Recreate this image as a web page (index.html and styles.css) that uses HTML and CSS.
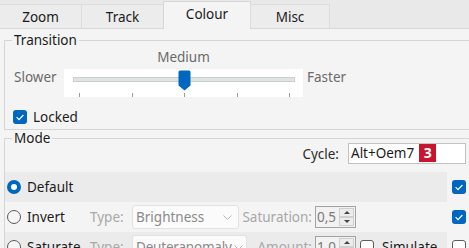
FILE: index.html
```html
<!DOCTYPE html>
<html lang="en">
<head>
<meta charset="utf-8">
<title>Colour</title>
<link rel="stylesheet" href="styles.css">
</head>
<body>
<div class="window">
  <div class="tabs">
    <div class="tab tab-zoom">Zoom</div>
    <div class="tab tab-track">Track</div>
    <div class="tab tab-colour active">Colour</div>
    <div class="tab tab-misc">Misc</div>
  </div>
  <div class="page">
    <fieldset class="group transition">
      <legend>Transition</legend>
      <div class="speed">
        <div class="medium">Medium</div>
        <div class="slower">Slower</div>
        <div class="slider">
          <div class="track"></div>
          <svg class="thumb" style="left:114px" width="13" height="21" viewBox="0 0 13 21"><path d="M2 0.5h9a1.5 1.5 0 0 1 1.5 1.5v13.5l-6 5-6-5V2A1.5 1.5 0 0 1 2 0.5z" fill="#0067c0"/></svg>
          <div class="ticks"><i></i><i></i><i></i><i></i><i></i></div>
        </div>
        <div class="faster">Faster</div>
      </div>
      <label class="check locked"><span class="cb on"><svg width="14" height="14" viewBox="0 0 14 14"><path d="M3.6 7.2l2.4 2.4 4.4-4.6" fill="none" stroke="#fff" stroke-width="1.2"/></svg></span>Locked</label>
    </fieldset>
    <fieldset class="group mode">
      <legend>Mode</legend>
      <div class="cycle">
        <span class="cycle-label">Cycle:</span>
        <div class="hotkey">Alt+Oem7<span class="badge">3</span></div>
      </div>
      <div class="modes">
        <div class="opt shade">
          <span class="radio on"></span><span class="name">Default</span>
        </div>
        <span class="cb on"><svg width="14" height="14" viewBox="0 0 14 14"><path d="M3.6 7.2l2.4 2.4 4.4-4.6" fill="none" stroke="#fff" stroke-width="1.2"/></svg></span>

        <div class="opt">
          <span class="radio"></span><span class="name">Invert</span>
          <span class="dim type">Type:</span>
          <div class="combo-wrap">
            <div class="combo w-invert"><span>Brightness</span><svg width="9" height="5" viewBox="0 0 9 5"><path d="M0.5 0.5l4 4 4-4" fill="none" stroke="#b4b4b4" stroke-width="1"/></svg></div>
            <span class="dim lbl">Saturation:</span>
          </div>
          <div class="spin"><span class="val">0,5</span><div class="btns"><b class="up"></b><b class="down"></b></div></div>
        </div>
        <span class="cb on"><svg width="14" height="14" viewBox="0 0 14 14"><path d="M3.6 7.2l2.4 2.4 4.4-4.6" fill="none" stroke="#fff" stroke-width="1.2"/></svg></span>

        <div class="opt shade">
          <span class="radio"></span><span class="name">Saturate</span>
          <span class="dim type">Type:</span>
          <div class="combo-wrap">
            <div class="combo w-saturate"><span>Deuteranomaly</span><svg width="9" height="5" viewBox="0 0 9 5"><path d="M0.5 0.5l4 4 4-4" fill="none" stroke="#b4b4b4" stroke-width="1"/></svg></div>
            <span class="dim lbl">Amount:</span>
          </div>
          <div class="spin"><span class="val">1,0</span><div class="btns"><b class="up"></b><b class="down"></b></div></div>
          <label class="check simulate"><span class="cb"></span>Simulate</label>
        </div>
        <span class="cb"></span>
      </div>
    </fieldset>
  </div>
</div>
</body>
</html>
```

FILE: styles.css
```css
html, body {
  margin: 0;
  padding: 0;
  overflow: hidden;
  background: #f4f4f4;
}
body {
  font-family: "Noto Sans", "Segoe UI", sans-serif;
  font-size: 13.5px;
  color: #1b1b1b;
}
.window {
  width: 480px;
  height: 248px;
  background: #f4f4f4;
}

/* tabs */
.tabs {
  display: flex;
  align-items: flex-end;
  height: 29px;
  box-sizing: border-box;
  background: #e9e9e9;
  border-bottom: 1px solid #d9d9d9;
}
.tab {
  box-sizing: border-box;
  height: 24px;
  margin-left: -1px;
  border: 1px solid #dcdcdc;
  border-bottom: none;
  background: #ececec;
  display: flex;
  align-items: center;
  justify-content: center;
  line-height: 17px;
  padding-top: 1px;
}
.tab-zoom { width: 83px; }
.tab-track { width: 83px; }
.tab-colour { width: 88px; }
.tab-misc { width: 80px; }
.tab.active {
  height: 28px;
  margin-bottom: -1px;
  background: #f4f4f4;
  border-color: #d6d6d6;
  padding-top: 0;
  padding-bottom: 3px;
}

/* group boxes */
.group {
  margin: 0 4px 0 4px;
  padding: 0;
  border: 1px solid #d5d5d5;
  min-width: 0;
}
.group legend {
  margin-left: 7px;
  padding: 0 2px;
  line-height: 17px;
  color: #1b1b1b;
}
.transition { margin-top: 3px; }

.speed {
  display: grid;
  grid-template-columns: 50px 239px auto;
  grid-template-rows: 17px auto;
  margin-left: 9px;
  line-height: 17px;
  color: #6a6a6a;
}
.medium {
  grid-column: 2;
  grid-row: 1;
  text-align: center;
}
.slower { grid-column: 1; grid-row: 2; }
.slider { grid-column: 2; grid-row: 2; }
.faster { grid-column: 3; grid-row: 2; margin-left: 4px; }
.slower, .slider, .faster { margin-top: 3px; }
.slider {
  position: relative;
  height: 28px;
  background: #ffffff;
}
.track {
  margin: 8px 0 0 9px;
  width: 220px;
  height: 3px;
  background: #dfe5e3;
  border: 1px solid #c9d0ce;
}
.thumb {
  position: absolute;
  top: 1px;
}
.ticks {
  display: flex;
  justify-content: space-between;
  width: 211px;
  margin: 11px 0 0 15px;
}
.ticks i {
  display: block;
  width: 1px;
  height: 4px;
  background: #9a9a9a;
}

.check {
  display: flex;
  align-items: center;
  gap: 6px;
}
.locked {
  margin: 10px 0 0 8px;
  height: 20px;
  padding-bottom: 2px;
}

.cb {
  box-sizing: border-box;
  display: block;
  flex: none;
  width: 14px;
  height: 14px;
  border-radius: 3px;
  border: 1px solid #5d5d5d;
  background: #ffffff;
}
.cb.on {
  border: none;
  background: #0067c0;
}
.cb svg { display: block; }

/* mode */
.cycle {
  display: flex;
  justify-content: flex-end;
  align-items: center;
  width: 461px;
  margin-top: -4px;
  gap: 9px;
}
.cycle-label { color: #2a2a2a; }
.hotkey {
  box-sizing: border-box;
  width: 118px;
  height: 21px;
  border: 1px solid #c2c2c2;
  background: #ffffff;
  display: flex;
  align-items: flex-start;
  padding-left: 2px;
  line-height: 19px;
  color: #1b1b1b;
}
.badge {
  margin-left: 5px;
  width: 17px;
  height: 18px;
  background: #c8152d;
  color: #ffffff;
  font-weight: bold;
  text-align: center;
  line-height: 18px;
  font-size: 14px;
}

.modes {
  display: grid;
  grid-template-columns: 442px 14px;
  grid-auto-rows: 30px;
  column-gap: 5px;
  align-items: center;
  margin-top: 8px;
}
.opt {
  height: 30px;
  display: flex;
  align-items: center;
  padding-left: 2px;
}
.opt.shade { background: #ebebeb; }
.radio {
  box-sizing: border-box;
  flex: none;
  width: 14px;
  height: 14px;
  border-radius: 50%;
  border: 1px solid #5a5a5a;
  background: #f6f6f6;
}
.radio.on {
  border: 4px solid #0067c0;
  background: #ffffff;
}
.name {
  margin-left: 6px;
  width: 63px;
}
.dim { color: #a8a8a8; }
.type { width: 42px; }
.combo-wrap {
  display: flex;
  align-items: center;
  width: 183px;
}
.combo {
  box-sizing: border-box;
  height: 24px;
  border: 1px solid #e2e2e2;
  border-radius: 3px;
  background: #fbfbfb;
  display: flex;
  align-items: center;
  justify-content: space-between;
  gap: 2px;
  padding: 0 6px 0 3px;
  color: #8a8a8a;
  white-space: nowrap;
  overflow: hidden;
}
.combo svg { flex: none; }
.w-invert { width: 107px; }
.w-saturate { width: 115px; padding-right: 4px; letter-spacing: -0.2px; }
.lbl {
  flex: 1;
  text-align: right;
  padding-right: 3px;
}
.spin {
  box-sizing: border-box;
  width: 41px;
  height: 22px;
  border: 1px solid #a3a3a3;
  background: #f2f2f2;
  display: flex;
  align-items: center;
  justify-content: space-between;
  padding: 1px;
  color: #7a7a7a;
}
.btns {
  display: flex;
  flex-direction: column;
  width: 15px;
  height: 18px;
}
.btns b {
  flex: 1;
  box-sizing: border-box;
  border: 1px solid #cfcfcf;
  background: #ececec;
  display: flex;
  align-items: center;
  justify-content: center;
}
.btns b::after {
  content: "";
  width: 0;
  height: 0;
  border-left: 3px solid transparent;
  border-right: 3px solid transparent;
}
.btns .up::after { border-bottom: 3px solid #444; }
.btns .down::after { border-top: 3px solid #444; }
.simulate { margin-left: 4px; gap: 8px; }
```
